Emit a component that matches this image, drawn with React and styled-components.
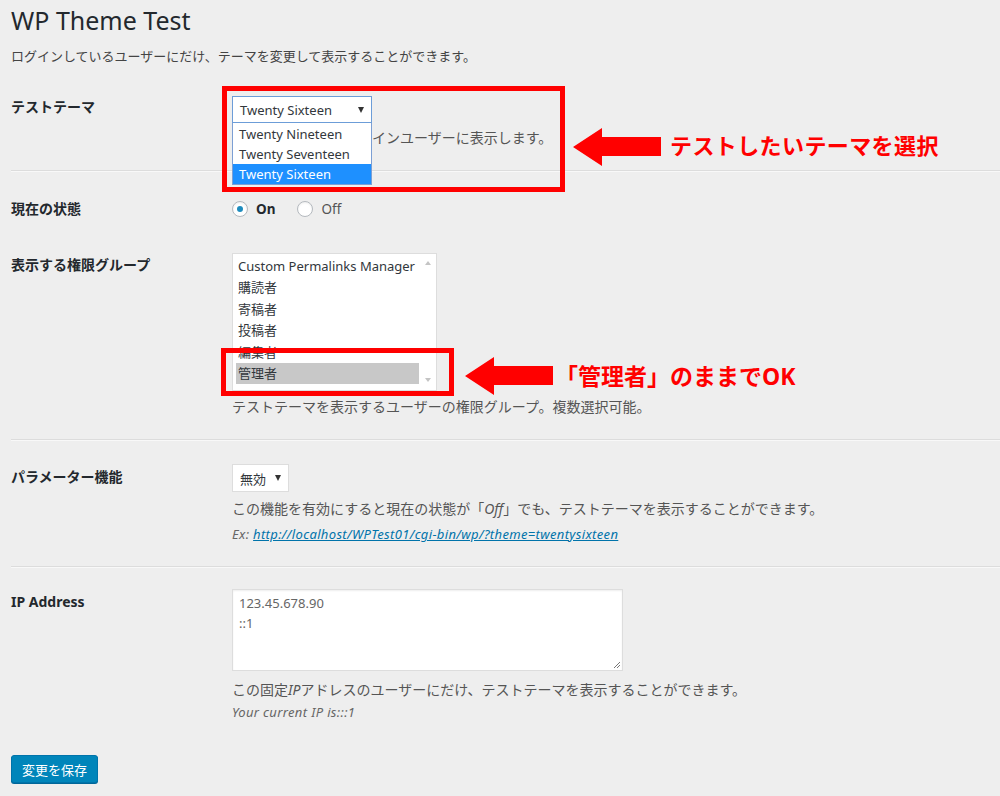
import React from "react";
import styled, { createGlobalStyle } from "styled-components";

const SANS = `"Noto Sans", "Noto Sans CJK JP", sans-serif`;

const GlobalStyle = createGlobalStyle`
  html, body { margin: 0; padding: 0; background: #eeeeee; }
  body { font-family: ${SANS}; color: #444; }
`;

// STYLED COMPONENT
const Page = styled.div`
  position: relative;
  min-height: 796px;
  padding: 5px 0 0 11px;
  box-sizing: border-box;
  overflow: hidden;
`;
const Title = styled.h1`
  margin: 0;
  font-size: 25px;
  line-height: 30px;
  font-weight: 400;
  color: #23282d;
`;
const Lead = styled.p`
  margin: 11px 0 0;
  font-size: 13px;
  line-height: 20px;
  color: #444;
`;
const Row = styled.div`
  display: grid;
  grid-template-columns: 221px 1fr;
  padding: ${(p) => p.$top}px 0 ${(p) => p.$bottom}px;
  margin-top: ${(p) => p.$mt || 0}px;
`;
const Divider = styled.hr`
  margin: 0;
  border: 0;
  border-top: 1px solid #dcdcdc;
  border-bottom: 1px solid #f8f8f8;
`;
const Label = styled.div`
  padding-top: ${(p) => p.$off}px;
  font-size: 14px;
  line-height: 20px;
  font-weight: 700;
  color: #23282d;
`;
const Field = styled.div`
  position: relative;
  display: flex;
  flex-direction: column;
  align-items: flex-start;
`;
const Desc = styled.p`
  margin: ${(p) => p.$mt}px 0 0;
  font-size: 14px;
  line-height: 20px;
  color: #555;
  white-space: nowrap;
  & em { font-style: italic; }
`;
const Note = styled(Desc)`
  font-size: 13px;
  letter-spacing: 0.35px;
  font-style: italic;
  color: #666;
  & a { color: #0073aa; text-decoration: underline; }
`;
const SelectBox = styled.div`
  box-sizing: border-box;
  display: flex;
  align-items: center;
  justify-content: space-between;
  width: ${(p) => p.$w}px;
  height: ${(p) => p.$h}px;
  padding: 0 7px 0 7px;
  background: #fff;
  border: 1px solid ${(p) => (p.$focus ? "#6c9dd8" : "#ddd")};
  font-size: 13px;
  color: #32373c;
`;
const Caret = styled.span`
  width: 0;
  height: 0;
  border-left: 3.5px solid transparent;
  border-right: 3.5px solid transparent;
  border-top: 6px solid #333;
  margin-left: 8px;
`;
const DropList = styled.ul`
  position: absolute;
  top: 27px;
  left: 0;
  width: 140px;
  margin: 0;
  padding: 1px 0 0;
  list-style: none;
  box-sizing: border-box;
  background: #fff;
  border: 1px solid #7c9fd4;
  border-top: 0;
  z-index: 2;
`;
const DropItem = styled.li`
  height: 20px;
  line-height: 20px;
  padding-left: 6px;
  font-size: 13px;
  color: ${(p) => (p.$active ? "#fff" : "#32373c")};
  background: ${(p) => (p.$active ? "#1e90ff" : "#fff")};
`;
const Radios = styled.div`
  display: flex;
  align-items: center;
  height: 20px;
`;
const RadioItem = styled.label`
  display: flex;
  align-items: center;
  gap: 8px;
  margin-right: 22px;
  font-size: 13.5px;
  font-weight: ${(p) => (p.$on ? 700 : 400)};
  color: ${(p) => (p.$on ? "#23282d" : "#555")};
`;
const RadioDot = styled.span`
  box-sizing: border-box;
  width: 16px;
  height: 16px;
  border-radius: 50%;
  border: 1px solid #b4b9be;
  background: #fff;
  box-shadow: inset 0 1px 2px rgba(0, 0, 0, 0.07);
  display: grid;
  place-items: center;
  &::after {
    content: "";
    width: 6px;
    height: 6px;
    border-radius: 50%;
    background: ${(p) => (p.$checked ? "#1e8cbe" : "transparent")};
  }
`;
const ListBox = styled.div`
  box-sizing: border-box;
  width: 205px;
  height: 138px;
  display: flex;
  background: #fff;
  border: 1px solid #ddd;
  padding: 2px 0 3px 3px;
`;
const ListItems = styled.ul`
  flex: 1;
  margin: 0;
  padding: 0;
  list-style: none;
`;
const ListItem = styled.li`
  height: 21.4px;
  line-height: 21.4px;
  padding-left: 2px;
  font-size: 13px;
  color: #32373c;
  white-space: nowrap;
  background: ${(p) => (p.$sel ? "#c8c8c8" : "transparent")};
`;
const ScrollTrack = styled.div`
  width: 17px;
  display: flex;
  flex-direction: column;
  justify-content: space-between;
  align-items: center;
  padding: 5px 0;
  & span {
    width: 0;
    height: 0;
    border-left: 3.5px solid transparent;
    border-right: 3.5px solid transparent;
  }
  & span:first-child { border-bottom: 4px solid #c4c4c4; }
  & span:last-child { border-top: 4px solid #c4c4c4; }
`;
const TextArea = styled.div`
  position: relative;
  box-sizing: border-box;
  width: 391px;
  height: 82px;
  padding: 3px 6px;
  background: #fff;
  border: 1px solid #ddd;
  box-shadow: inset 0 1px 2px rgba(0, 0, 0, 0.07);
  font-size: 13px;
  line-height: 20px;
  color: #666;
`;
const Grip = styled.svg`
  position: absolute;
  right: 1px;
  bottom: 1px;
`;
const SaveButton = styled.button`
  margin-top: 33px;
  width: 87px;
  height: 28px;
  padding: 0;
  background: #0085ba;
  border: 1px solid #0073aa;
  border-radius: 3px;
  box-shadow: 0 1px 0 #006799;
  font-family: ${SANS};
  font-size: 13px;
  color: #fff;
`;

// annotations drawn over the screenshot
const RedFrame = styled.div`
  position: absolute;
  box-sizing: border-box;
  border: 5px solid #ff0000;
  z-index: 3;
  pointer-events: none;
`;
const Arrow = styled.svg`
  position: absolute;
  z-index: 3;
`;
const Callout = styled.div`
  position: absolute;
  font-size: ${(p) => p.$size}px;
  line-height: 1;
  font-weight: 700;
  color: #ff0000;
  white-space: nowrap;
  letter-spacing: ${(p) => p.$ls || 0}px;
`;

const RedArrow = ({ x, y }) => (
  <Arrow style={{ left: x, top: y }} width="90" height="40" viewBox="0 0 90 40">
    <polygon points="1,20 30,1 30,10 89,10 89,29 30,29 30,39" fill="#ff0000" />
  </Arrow>
);

// JSX STRUCTURE COMPONENT
const App = () => {
  const roles = ["Custom Permalinks Manager", "購読者", "寄稿者", "投稿者", "編集者", "管理者"];
  return (
    <>
      <GlobalStyle />
      <Page>
        <Title>WP Theme Test</Title>
        <Lead>ログインしているユーザーにだけ、テーマを変更して表示することができます。</Lead>

        <Row $top={10} $bottom={22} $mt={20}>
          <Label $off={1}>テストテーマ</Label>
          <Field>
            <SelectBox $w={140} $h={27} $focus>
              Twenty Sixteen <Caret />
            </SelectBox>
            <DropList>
              <DropItem>Twenty Nineteen</DropItem>
              <DropItem>Twenty Seventeen</DropItem>
              <DropItem $active>Twenty Sixteen</DropItem>
            </DropList>
            <Desc $mt={5}>選択したテーマをログインユーザーに表示します。</Desc>
          </Field>
        </Row>
        <Divider />

        <Row $top={27} $bottom={17}>
          <Label $off={-1}>現在の状態</Label>
          <Field>
            <Radios>
              <RadioItem $on>
                <RadioDot $checked /> On
              </RadioItem>
              <RadioItem>
                <RadioDot /> Off
              </RadioItem>
            </Radios>
          </Field>
        </Row>

        <Row $top={17} $bottom={22}>
          <Label $off={2}>表示する権限グループ</Label>
          <Field>
            <ListBox>
              <ListItems>
                {roles.map((r) => (
                  <ListItem key={r} $sel={r === "管理者"}>{r}</ListItem>
                ))}
              </ListItems>
              <ScrollTrack>
                <span />
                <span />
              </ScrollTrack>
            </ListBox>
            <Desc $mt={6}>テストテーマを表示するユーザーの権限グループ。複数選択可能。</Desc>
          </Field>
        </Row>
        <Divider />

        <Row $top={23} $bottom={22}>
          <Label $off={3}>パラメーター機能</Label>
          <Field>
            <SelectBox $w={57} $h={28}>
              無効 <Caret />
            </SelectBox>
            <Desc $mt={7}>
              この機能を有効にすると現在の状態が「<em>Off</em>」でも、テストテーマを表示することができます。
            </Desc>
            <Note $mt={5}>
              Ex: <a>http://localhost/WPTest01/cgi-bin/wp/?theme=twentysixteen</a>
            </Note>
          </Field>
        </Row>
        <Divider />

        <Row $top={21} $bottom={0}>
          <Label $off={3}>IP Address</Label>
          <Field>
            <TextArea>
              123.45.678.90
              <br />
              ::1
              <Grip width="9" height="9" viewBox="0 0 9 9">
                <path d="M8 2 L2 8 M8 5 L5 8" stroke="#777" strokeWidth="1" />
              </Grip>
            </TextArea>
            <Desc $mt={9}>
              この固定<em>IP</em>アドレスのユーザーにだけ、テストテーマを表示することができます。
            </Desc>
            <Note $mt={2}>Your current IP is:::1</Note>
          </Field>
        </Row>

        <SaveButton>変更を保存</SaveButton>

        <RedFrame style={{ left: 222, top: 86, width: 343, height: 106 }} />
        <RedArrow x={572} y={127} />
        <Callout $size={22} $ls={0.4} style={{ left: 670, top: 134 }}>テストしたいテーマを選択</Callout>

        <RedFrame style={{ left: 221, top: 348, width: 233, height: 48 }} />
        <RedArrow x={464} y={356} />
        <Callout $size={23} style={{ left: 555, top: 365 }}>「管理者」のままでOK</Callout>
      </Page>
    </>
  );
};

export default App;
